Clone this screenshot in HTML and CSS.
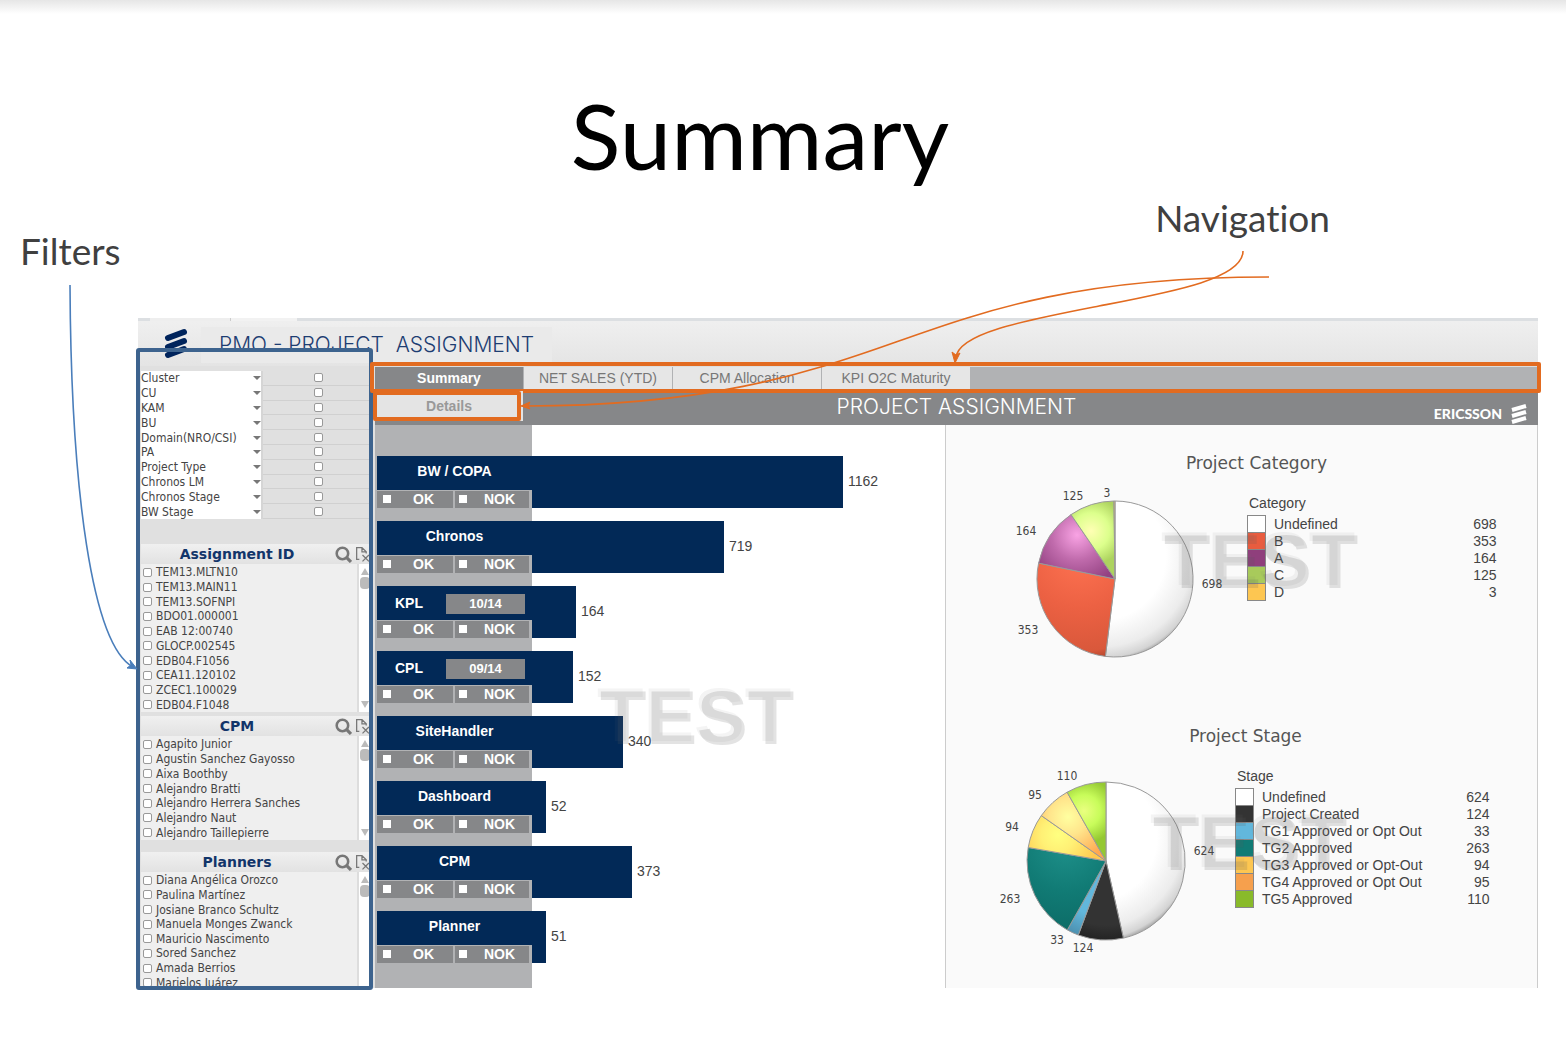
FILE: index.html
```html
<!DOCTYPE html>
<html lang="en">
<head>
<meta charset="utf-8">
<title>Summary</title>
<link rel="stylesheet" href="styles.css">
</head>
<body>
<main class="slide">
  <h1 class="slide-title">Summary</h1>
  <div class="callouts">
    <p class="callout callout-filters">Filters</p>
    <p class="callout">Navigation</p>
  </div>

  <div class="dashboard">
    <header class="app-header">
      <svg class="logo" viewBox="0 0 24 32" aria-hidden="true">
        <path d="M4 11 20 5M4 20 20 14M4 28 20 22" />
      </svg>
      <h2 class="app-title">PMO - PROJECT&nbsp; ASSIGNMENT</h2>
    </header>

    <div class="app-body">
      <aside class="sidebar">
        <div class="filters">
          <div class="filter"><span class="pick"><select aria-label="Cluster"><option>Cluster</option></select><i class="caret"></i></span><span class="cell"><input type="checkbox" aria-label="Select Cluster"></span></div>
          <div class="filter"><span class="pick"><select aria-label="CU"><option>CU</option></select><i class="caret"></i></span><span class="cell"><input type="checkbox" aria-label="Select CU"></span></div>
          <div class="filter"><span class="pick"><select aria-label="KAM"><option>KAM</option></select><i class="caret"></i></span><span class="cell"><input type="checkbox" aria-label="Select KAM"></span></div>
          <div class="filter"><span class="pick"><select aria-label="BU"><option>BU</option></select><i class="caret"></i></span><span class="cell"><input type="checkbox" aria-label="Select BU"></span></div>
          <div class="filter"><span class="pick"><select aria-label="Domain(NRO/CSI)"><option>Domain(NRO/CSI)</option></select><i class="caret"></i></span><span class="cell"><input type="checkbox" aria-label="Select Domain"></span></div>
          <div class="filter"><span class="pick"><select aria-label="PA"><option>PA</option></select><i class="caret"></i></span><span class="cell"><input type="checkbox" aria-label="Select PA"></span></div>
          <div class="filter"><span class="pick"><select aria-label="Project Type"><option>Project Type</option></select><i class="caret"></i></span><span class="cell"><input type="checkbox" aria-label="Select Project Type"></span></div>
          <div class="filter"><span class="pick"><select aria-label="Chronos LM"><option>Chronos LM</option></select><i class="caret"></i></span><span class="cell"><input type="checkbox" aria-label="Select Chronos LM"></span></div>
          <div class="filter"><span class="pick"><select aria-label="Chronos Stage"><option>Chronos Stage</option></select><i class="caret"></i></span><span class="cell"><input type="checkbox" aria-label="Select Chronos Stage"></span></div>
          <div class="filter"><span class="pick"><select aria-label="BW Stage"><option>BW Stage</option></select><i class="caret"></i></span><span class="cell"><input type="checkbox" aria-label="Select BW Stage"></span></div>
        </div>

        <section class="listbox">
          <header class="listbox-head">
            <h3>Assignment ID</h3>
            <button aria-label="Search"><svg viewBox="0 0 16 16"><circle cx="7" cy="7" r="5.4" stroke-width="2.4"/><path d="m11 11 4 4" stroke-width="3"/></svg></button>
            <button aria-label="Clear"><svg viewBox="0 0 16 16"><path d="M5 12.5H2.500V1.500H7.500L11.500 5.500V7M7.500 1.500V5.500H11.500M8 8.500l6 6M14 8.500l-6 6" stroke-width="1.200"/></svg></button>
          </header>
          <div class="listbox-body rows-10">
            <div class="items">
              <label><input type="checkbox">TEM13.MLTN10</label>
              <label><input type="checkbox">TEM13.MAIN11</label>
              <label><input type="checkbox">TEM13.SOFNPI</label>
              <label><input type="checkbox">BDO01.000001</label>
              <label><input type="checkbox">EAB 12:00740</label>
              <label><input type="checkbox">GLOCP.002545</label>
              <label><input type="checkbox">EDB04.F1056</label>
              <label><input type="checkbox">CEA11.120102</label>
              <label><input type="checkbox">ZCEC1.100029</label>
              <label><input type="checkbox">EDB04.F1048</label>
            </div>
            <div class="scroll"><i class="up"></i><i class="thumb"></i><i class="down"></i></div>
          </div>
        </section>

        <section class="listbox listbox-cpm">
          <header class="listbox-head">
            <h3>CPM</h3>
            <button aria-label="Search"><svg viewBox="0 0 16 16"><circle cx="7" cy="7" r="5.4" stroke-width="2.4"/><path d="m11 11 4 4" stroke-width="3"/></svg></button>
            <button aria-label="Clear"><svg viewBox="0 0 16 16"><path d="M5 12.5H2.500V1.500H7.500L11.500 5.500V7M7.500 1.500V5.500H11.500M8 8.500l6 6M14 8.500l-6 6" stroke-width="1.200"/></svg></button>
          </header>
          <div class="listbox-body rows-7">
            <div class="items">
              <label><input type="checkbox">Agapito Junior</label>
              <label><input type="checkbox">Agustin Sanchez Gayosso</label>
              <label><input type="checkbox">Aixa Boothby</label>
              <label><input type="checkbox">Alejandro Bratti</label>
              <label><input type="checkbox">Alejandro Herrera Sanches</label>
              <label><input type="checkbox">Alejandro Naut</label>
              <label><input type="checkbox">Alejandro Taillepierre</label>
            </div>
            <div class="scroll"><i class="up"></i><i class="thumb"></i><i class="down"></i></div>
          </div>
        </section>

        <section class="listbox listbox-planners">
          <header class="listbox-head">
            <h3>Planners</h3>
            <button aria-label="Search"><svg viewBox="0 0 16 16"><circle cx="7" cy="7" r="5.4" stroke-width="2.4"/><path d="m11 11 4 4" stroke-width="3"/></svg></button>
            <button aria-label="Clear"><svg viewBox="0 0 16 16"><path d="M5 12.5H2.500V1.500H7.500L11.500 5.500V7M7.500 1.500V5.500H11.500M8 8.500l6 6M14 8.500l-6 6" stroke-width="1.200"/></svg></button>
          </header>
          <div class="listbox-body rows-8">
            <div class="items">
              <label><input type="checkbox">Diana Angélica Orozco</label>
              <label><input type="checkbox">Paulina Martínez</label>
              <label><input type="checkbox">Josiane Branco Schultz</label>
              <label><input type="checkbox">Manuela Monges Zwanck</label>
              <label><input type="checkbox">Mauricio Nascimento</label>
              <label><input type="checkbox">Sored Sanchez</label>
              <label><input type="checkbox">Amada Berrios</label>
              <label><input type="checkbox">Marielos Juárez</label>
            </div>
            <div class="scroll"><i class="up"></i><i class="thumb"></i></div>
          </div>
        </section>
      </aside>

      <div class="main">
        <nav class="tabs">
          <a class="tab active" href="#summary">Summary</a>
          <a class="tab" href="#net-sales">NET SALES (YTD)</a>
          <a class="tab" href="#cpm">CPM Allocation</a>
          <a class="tab" href="#kpi">KPI O2C Maturity</a>
        </nav>
        <div class="titlebar">
          <a class="details" href="#details">Details</a>
          <h2>PROJECT ASSIGNMENT</h2>
          <span class="brand">ERICSSON
            <svg viewBox="0 0 18 22" aria-hidden="true"><path d="M2 7 16 3M2 13 16 9M2 19 16 15"/></svg>
          </span>
        </div>

        <div class="content">
          <section class="bars">
            <div class="bar"><div class="key"><div class="name">BW / COPA</div><div class="flags"><label><input type="checkbox">OK</label><label><input type="checkbox">NOK</label></div></div><div class="fill" style="width:311px"></div><span class="value">1162</span></div>
            <div class="bar"><div class="key"><div class="name">Chronos</div><div class="flags"><label><input type="checkbox">OK</label><label><input type="checkbox">NOK</label></div></div><div class="fill" style="width:192px"></div><span class="value">719</span></div>
            <div class="bar"><div class="key"><div class="name dated">KPL<button>10/14</button></div><div class="flags"><label><input type="checkbox">OK</label><label><input type="checkbox">NOK</label></div></div><div class="fill" style="width:44px"></div><span class="value">164</span></div>
            <div class="bar"><div class="key"><div class="name dated">CPL<button>09/14</button></div><div class="flags"><label><input type="checkbox">OK</label><label><input type="checkbox">NOK</label></div></div><div class="fill" style="width:41px"></div><span class="value">152</span></div>
            <div class="bar"><div class="key"><div class="name">SiteHandler</div><div class="flags"><label><input type="checkbox">OK</label><label><input type="checkbox">NOK</label></div></div><div class="fill" style="width:91px"></div><span class="value">340</span></div>
            <div class="bar"><div class="key"><div class="name">Dashboard</div><div class="flags"><label><input type="checkbox">OK</label><label><input type="checkbox">NOK</label></div></div><div class="fill" style="width:14px"></div><span class="value">52</span></div>
            <div class="bar"><div class="key"><div class="name">CPM</div><div class="flags"><label><input type="checkbox">OK</label><label><input type="checkbox">NOK</label></div></div><div class="fill" style="width:100px"></div><span class="value">373</span></div>
            <div class="bar"><div class="key"><div class="name">Planner</div><div class="flags"><label><input type="checkbox">OK</label><label><input type="checkbox">NOK</label></div></div><div class="fill" style="width:14px"></div><span class="value">51</span></div>
            <span class="watermark wm-bars">TEST</span>
          </section>

          <div class="pies">
            <section class="pie-card category">
              <h3>Project Category</h3>
              <div class="pie-row">
                <svg class="pie" viewBox="-115 -94 230 190" role="img" aria-label="Project Category pie">
                  <defs>
                    <radialGradient id="white" gradientUnits="userSpaceOnUse" cx="-14" cy="-24" r="108"><stop offset=".6" stop-color="#fff"/><stop offset=".85" stop-color="#ececec"/><stop offset=".95" stop-color="#d4d4d4"/><stop offset="1" stop-color="#999"/></radialGradient>
                    <radialGradient id="red" gradientUnits="userSpaceOnUse" cx="-35" cy="-25" r="108"><stop offset="0" stop-color="#ff7352"/><stop offset=".5" stop-color="#ec6143"/><stop offset=".9" stop-color="#d9583b"/><stop offset="1" stop-color="#a9432b"/></radialGradient>
                    <radialGradient id="purple" gradientUnits="userSpaceOnUse" cx="-38" cy="-44" r="50"><stop offset="0" stop-color="#f9a3e4"/><stop offset=".5" stop-color="#c06bac"/><stop offset="1" stop-color="#934282"/></radialGradient>
                    <radialGradient id="lime" gradientUnits="userSpaceOnUse" cx="-24" cy="-48" r="52"><stop offset="0" stop-color="#ffffb4"/><stop offset=".35" stop-color="#dcff8c"/><stop offset=".65" stop-color="#add35f"/></radialGradient>
                  </defs>
                  <g class="slices">
                    <path fill="url(#white)" d="M0 0V-78A78 78 0 1 1-9.600 77.400Z"/>
                    <path fill="url(#red)" d="M0 0-9.600 77.400A78 78 0 0 1-76.400-15.900Z"/>
                    <path fill="url(#purple)" d="M0 0-76.400-15.900A78 78 0 0 1-44-64.400Z"/>
                    <path fill="url(#lime)" d="M0 0-44-64.400A78 78 0 0 1-1-78Z"/>
                    <path fill="#fdc651" d="M0 0-1-78H0Z"/>
                  </g>
                  <g class="pie-labels">
                    <text x="97" y="9">698</text><text x="-87" y="55">353</text><text x="-89" y="-44">164</text><text x="-42" y="-79">125</text><text x="-8" y="-82">3</text>
                  </g>
                </svg>
                <table class="legend">
                  <caption>Category</caption>
                  <tr><td class="sw sw-white"></td><th scope="row">Undefined</th><td>698</td></tr>
                  <tr><td class="sw sw-red"></td><th scope="row">B</th><td>353</td></tr>
                  <tr><td class="sw sw-purple"></td><th scope="row">A</th><td>164</td></tr>
                  <tr><td class="sw sw-lime"></td><th scope="row">C</th><td>125</td></tr>
                  <tr><td class="sw sw-amber"></td><th scope="row">D</th><td>3</td></tr>
                </table>
              </div>
              <span class="watermark wm-category">TEST</span>
            </section>

            <section class="pie-card stage">
              <h3>Project Stage</h3>
              <div class="pie-row">
                <svg class="pie" viewBox="-115 -94 230 190" role="img" aria-label="Project Stage pie">
                  <defs>
                    <radialGradient id="black" gradientUnits="userSpaceOnUse" cx="0" cy="0" r="80"><stop offset=".8" stop-color="#333"/><stop offset="1" stop-color="#222"/></radialGradient>
                    <radialGradient id="blue" gradientUnits="userSpaceOnUse" cx="0" cy="0" r="80"><stop offset=".7" stop-color="#62b7dc"/><stop offset="1" stop-color="#4b8fae"/></radialGradient>
                    <radialGradient id="teal" gradientUnits="userSpaceOnUse" cx="-40" cy="-15" r="90"><stop offset="0" stop-color="#1e908a"/><stop offset=".5" stop-color="#117b75"/><stop offset="1" stop-color="#0c6a65"/></radialGradient>
                    <radialGradient id="amber" gradientUnits="userSpaceOnUse" cx="-48" cy="-26" r="42"><stop offset="0" stop-color="#ffff80"/><stop offset=".4" stop-color="#fff075"/><stop offset="1" stop-color="#ffc84f"/></radialGradient>
                    <radialGradient id="orange" gradientUnits="userSpaceOnUse" cx="-38" cy="-44" r="46"><stop offset="0" stop-color="#ffffa0"/><stop offset=".4" stop-color="#ffe58c"/><stop offset="1" stop-color="#ffa850"/></radialGradient>
                    <radialGradient id="green" gradientUnits="userSpaceOnUse" cx="-22" cy="-50" r="46"><stop offset="0" stop-color="#eaff80"/><stop offset=".35" stop-color="#c8fc5a"/><stop offset=".7" stop-color="#94c832"/></radialGradient>
                  </defs>
                  <g class="slices">
                    <path fill="url(#white)" d="M0 0V-79A79 79 0 0 1 17.400 77.100Z"/>
                    <path fill="url(#black)" d="M0 0 17.400 77.100A79 79 0 0 1-27.700 74Z"/>
                    <path fill="url(#blue)" d="M0 0-27.700 74A79 79 0 0 1-38.700 68.900Z"/>
                    <path fill="url(#teal)" d="M0 0-38.700 68.900A79 79 0 0 1-77.800-13.500Z"/>
                    <path fill="url(#amber)" d="M0 0-77.800-13.500A79 79 0 0 1-64.700-45.400Z"/>
                    <path fill="url(#orange)" d="M0 0-64.700-45.400A79 79 0 0 1-38.900-68.800Z"/>
                    <path fill="url(#green)" d="M0 0-38.900-68.800A79 79 0 0 1 0-79Z"/>
                  </g>
                  <g class="pie-labels">
                    <text x="98" y="-6">624</text><text x="-23" y="91">124</text><text x="-49" y="83">33</text><text x="-96" y="42">263</text><text x="-94" y="-30">94</text><text x="-71" y="-62">95</text><text x="-39" y="-81">110</text>
                  </g>
                </svg>
                <table class="legend">
                  <caption>Stage</caption>
                  <tr><td class="sw sw-white"></td><th scope="row">Undefined</th><td>624</td></tr>
                  <tr><td class="sw sw-black"></td><th scope="row">Project Created</th><td>124</td></tr>
                  <tr><td class="sw sw-blue"></td><th scope="row">TG1 Approved or Opt Out</th><td>33</td></tr>
                  <tr><td class="sw sw-teal"></td><th scope="row">TG2 Approved</th><td>263</td></tr>
                  <tr><td class="sw sw-amber"></td><th scope="row">TG3 Approved or Opt-Out</th><td>94</td></tr>
                  <tr><td class="sw sw-orange"></td><th scope="row">TG4 Approved or Opt Out</th><td>95</td></tr>
                  <tr><td class="sw sw-green"></td><th scope="row">TG5 Approved</th><td>110</td></tr>
                </table>
              </div>
              <span class="watermark wm-stage">TEST</span>
            </section>
          </div>
        </div>
      </div>
    </div>
  </div>

  <svg class="connectors" width="1566" height="1062" viewBox="0 0 1566 1062" aria-hidden="true">
    <g class="to-filters"><path d="M70 285C71 490 92 645 133 667"/><path class="head" d="M137 669 127 668 131 665 130 660Z"/></g>
    <g class="to-nav"><path d="M1243 251C1243 279 1171 292 1099 306S957 333 956 358"/><path class="head" d="M955 363 952 352 956 355 960 353Z"/>
    <path d="M1269 277C1082 277 989 309 896 342S705 406 525 406"/><path class="head" d="M521 406 530 402 528 406 530 409Z"/></g>
  </svg>
</main>
</body>
</html>
```
FILE: styles.css
```css
* { box-sizing: border-box; }
body {
  margin: 0;
  background: #fff;
  font-family: "Liberation Sans", Arial, sans-serif;
  color: #444;
}
h1, h2, h3, p { margin: 0; font-weight: normal; }
a { text-decoration: none; }
button { margin: 0; padding: 0; border: 0; background: none; font: inherit; color: inherit; }

.slide {
  position: relative;
  min-height: 100vh;
  padding-bottom: 74px;
  background: linear-gradient(#e6e6e6, #fff 14px);
}
.slide-title {
  padding: 82px 46px 0 0;
  height: 190px;
  font: 92px/106px Lato, sans-serif;
  color: #000;
  text-align: center;
}
.callouts {
  display: flex;
  justify-content: space-between;
  height: 128px;
  padding: 6px 236px 0 20px;
}
.callout { font: 37px/44px Lato, sans-serif; font-variant-ligatures: none; color: #404040; }
.callout-filters { padding-top: 33px; }

.connectors { position: absolute; top: 0; left: 0; pointer-events: none; }
.connectors path { fill: none; stroke-width: 1.6; }
.to-filters path { stroke: #4a7ebb; }
.to-nav path { stroke: #e26b20; }
.connectors .head { stroke-width: 1; }
.to-filters .head { fill: #4a7ebb; }
.to-nav .head { fill: #e26b20; }

.dashboard { margin: 0 28px 0 138px; }
.app-header {
  display: flex;
  height: 48px;
  padding-top: 3px;
  background:
    linear-gradient(90deg, #dcdfe2 12px, #eee 12px 92px, #ccc 92px 93px, #f2f2f2 93px 159px, #dcdfe2 159px) 0 0 / 100% 3px no-repeat,
    linear-gradient(#f0f0f0, #e4e4e4);
}
.logo { width: 24px; height: 32px; margin: 6px 13px 0 26px; }
.logo path { stroke: #00245c; stroke-width: 6; stroke-linecap: round; fill: none; }
.app-title {
  height: 36px;
  margin-top: 6px;
  padding: 0 18px;
  background: #eaeaea;
  font: 300 21px/36px Inter, sans-serif;
  color: #1d3d72;
}

.app-body { display: flex; height: 622px; }

/* Filter pane */
.sidebar {
  position: relative;
  flex: none;
  width: 235px;
  padding: 5px 0 0 3px;
  background: #e0e0e0;
  font: 12px/14px "DejaVu Sans Condensed", "DejaVu Sans", sans-serif;
  font-stretch: condensed;
}
.sidebar::after {
  content: "";
  position: absolute;
  inset: -18px 0 -2px -2px;
  border: 4px solid #3d638e;
  border-radius: 3px;
  pointer-events: none;
}
.sidebar input, .flags input { appearance: none; margin: 0; flex: none; background: #fff; }
.sidebar input { width: 9px; height: 9px; border: 1px solid #999; border-radius: 2px; }
.filters { display: grid; grid-template-rows: repeat(10, 1fr); height: 148px; margin-bottom: 25px; }
.filter { display: flex; min-height: 0; }
.pick { display: flex; align-items: center; width: 122px; background: #fff; border-right: 2px solid #d5d5d5; }
.pick select {
  appearance: none;
  flex: 1;
  width: 100px;
  height: 14px;
  padding: 0;
  border: 0;
  background: none;
  font: inherit;
  color: #444;
}
.caret { border: 4px solid transparent; border-top-color: #777; border-bottom: 0; }
.cell { flex: 1; display: flex; align-items: center; justify-content: center; border-bottom: 1px solid #d0d0d0; }

.listbox { display: flex; flex-direction: column; }
.listbox-cpm { margin-top: 4px; }
.listbox-planners { margin-top: 12px; }
.listbox-head {
  display: flex;
  align-items: center;
  gap: 2px;
  height: 20px;
  padding-right: 2px;
  background: linear-gradient(#f0f0f0, #e2e2e2);
}
.listbox-head h3 {
  flex: 1;
  font: bold 14px/20px "DejaVu Sans", sans-serif;
  color: #12356a;
  text-align: center;
}
.listbox-head button { width: 17px; height: 16px; }
.listbox-head svg { display: block; width: 17px; height: 17px; fill: none; stroke: #777; }
.listbox-body { display: flex; background: #efefef; overflow: hidden; }
.rows-10 { height: 148px; }
.rows-7 { height: 104px; }
.rows-8 { height: 118px; }
.items { flex: 1; display: flex; flex-direction: column; padding-top: 1px; }
.items label { flex: 1; display: flex; align-items: center; gap: 4px; padding-left: 2px; white-space: nowrap; }
.scroll {
  display: flex;
  flex-direction: column;
  align-items: center;
  width: 16px;
  padding: 4px 3px 4px 0;
  border-left: 2px solid #ddd;
  background: #fff;
}
.up { border: 4px solid transparent; border-bottom: 7px solid #bbb; border-top: 0; }
.down { margin-top: auto; border: 4px solid transparent; border-top: 7px solid #bbb; border-bottom: 0; }
.thumb { width: 10px; height: 12px; margin-top: 2px; border-radius: 4px; background: #bbb; }

/* Main pane */
.main { flex: 1; min-width: 0; padding-left: 2px; background: #e0e0e0; }
.tabs { position: relative; display: flex; height: 24px; background: #b1b2b4; border-top: 1px solid #ddd; }
.tabs::after, .details::after {
  content: "";
  position: absolute;
  border: 4px solid #e26b20;
  border-radius: 2px;
  pointer-events: none;
}
.tabs::after { inset: -5px -3px -3px -5px; }
.tab {
  width: 149px;
  border-right: 1px solid #b1b2b4;
  background: #e6e6e6;
  font-size: 14px;
  line-height: 23px;
  color: #777;
  text-align: center;
}
.tab.active { background: #868789; color: #fff; font-weight: bold; }
.titlebar {
  display: grid;
  grid-template-columns: 148px 1fr 148px;
  height: 35px;
  background: #868789;
}
.details {
  position: relative;
  margin: 1px 0 4px;
  background: #e4e4e4;
  font-size: 14px;
  font-weight: bold;
  line-height: 30px;
  color: #999;
  text-align: center;
}
.details::after { inset: 0 2px 0 -2px; }
.titlebar h2 { font: 300 21px/33px Inter, sans-serif; color: #fff; text-align: center; }
.brand {
  display: flex;
  justify-content: flex-end;
  align-items: center;
  gap: 8px;
  padding: 12px 10px 0 0;
  font: 900 14px/20px Lato, sans-serif;
  color: #fff;
}
.brand svg { width: 18px; height: 22px; }
.brand path { stroke: #fff; stroke-width: 4; fill: none; }

.content { display: flex; height: 563px; background: #fff; }
.bars {
  position: relative;
  flex: 1;
  display: flex;
  flex-direction: column;
  gap: 13px;
  padding: 31px 0 0 2px;
  background: linear-gradient(90deg, #b1b2b4 157px, #fff 157px);
}
.bar { display: flex; height: 52px; }
.key { display: flex; flex-direction: column; width: 155px; background: #022957; color: #fff; font-size: 14px; font-weight: bold; }
.name { height: 34px; line-height: 30px; text-align: center; }
.dated { display: flex; align-items: center; justify-content: space-between; padding: 0 7px 0 18px; }
.dated button { width: 79px; height: 20px; margin-top: 2px; background: #868789; font-size: 13px; line-height: 20px; }
.flags { display: flex; gap: 2px; height: 18px; padding-right: 3px; border-top: 1px solid #b1b2b4; background: #b1b2b4; }
.flags label { flex: 1; display: flex; align-items: center; gap: 22px; padding-left: 6px; padding-bottom: 1px; background: #868789; line-height: 16px; }
.flags label + label { gap: 17px; padding-left: 4px; }
.flags input { width: 8px; height: 8px; }
.fill { background: #022957; }
.value { padding-left: 5px; font-size: 14px; line-height: 51px; }

.watermark {
  position: absolute;
  font: bold 76px/76px "Liberation Sans", Arial, sans-serif;
  color: rgba(90, 90, 90, .17);
  text-shadow: -3px -3px 0 rgba(120, 120, 120, .08);
  pointer-events: none;
}
.wm-bars { left: 225px; top: 255px; }
.wm-category { left: 218px; top: 99px; }
.wm-stage { left: 207px; top: 108px; }

.pies { flex: none; width: 593px; border: 1px solid #ccc; border-width: 0 1px; background: #fafafa; }
.pie-card { position: relative; height: 273px; padding-top: 26px; }
.pie-card h3 { padding-left: 30px; font: 17px/25px "DejaVu Sans", sans-serif; color: #555; text-align: center; }
.stage h3 { padding-left: 8px; }
.pie-row { display: flex; gap: 17px; padding: 9px 0 0 54px; }
.stage .pie-row { padding: 18px 0 0 45px; gap: 14px; }
.pie { flex: none; width: 230px; height: 190px; }
.slices path { stroke: #999; stroke-width: 1; }
.pie-labels text { font: 12px "DejaVu Sans Condensed", "DejaVu Sans", sans-serif; font-stretch: condensed; text-anchor: middle; fill: #444; }
.legend { align-self: flex-start; width: 250px; margin-top: 10px; border-collapse: collapse; font-size: 14px; line-height: 16px; }
.stage .legend { width: 255px; margin-top: 1px; }
.legend caption { padding: 0 0 4px 2px; text-align: left; }
.legend td, .legend th { height: 17px; padding: 0; font-weight: normal; text-align: right; }
.legend th { padding-left: 8px; text-align: left; }
.legend .sw { width: 18px; border: 1px solid #888; }
.sw-white { background: #fff; }
.sw-red { background: #e85c3f; }
.sw-purple { background: #8f3f7c; }
.sw-lime { background: #a8ca5b; }
.sw-amber { background: #fdc651; }
.sw-black { background: #333; }
.sw-blue { background: #62b7dc; }
.sw-teal { background: #117b75; }
.sw-orange { background: #f6a04d; }
.sw-green { background: #89ba2a; }
```
